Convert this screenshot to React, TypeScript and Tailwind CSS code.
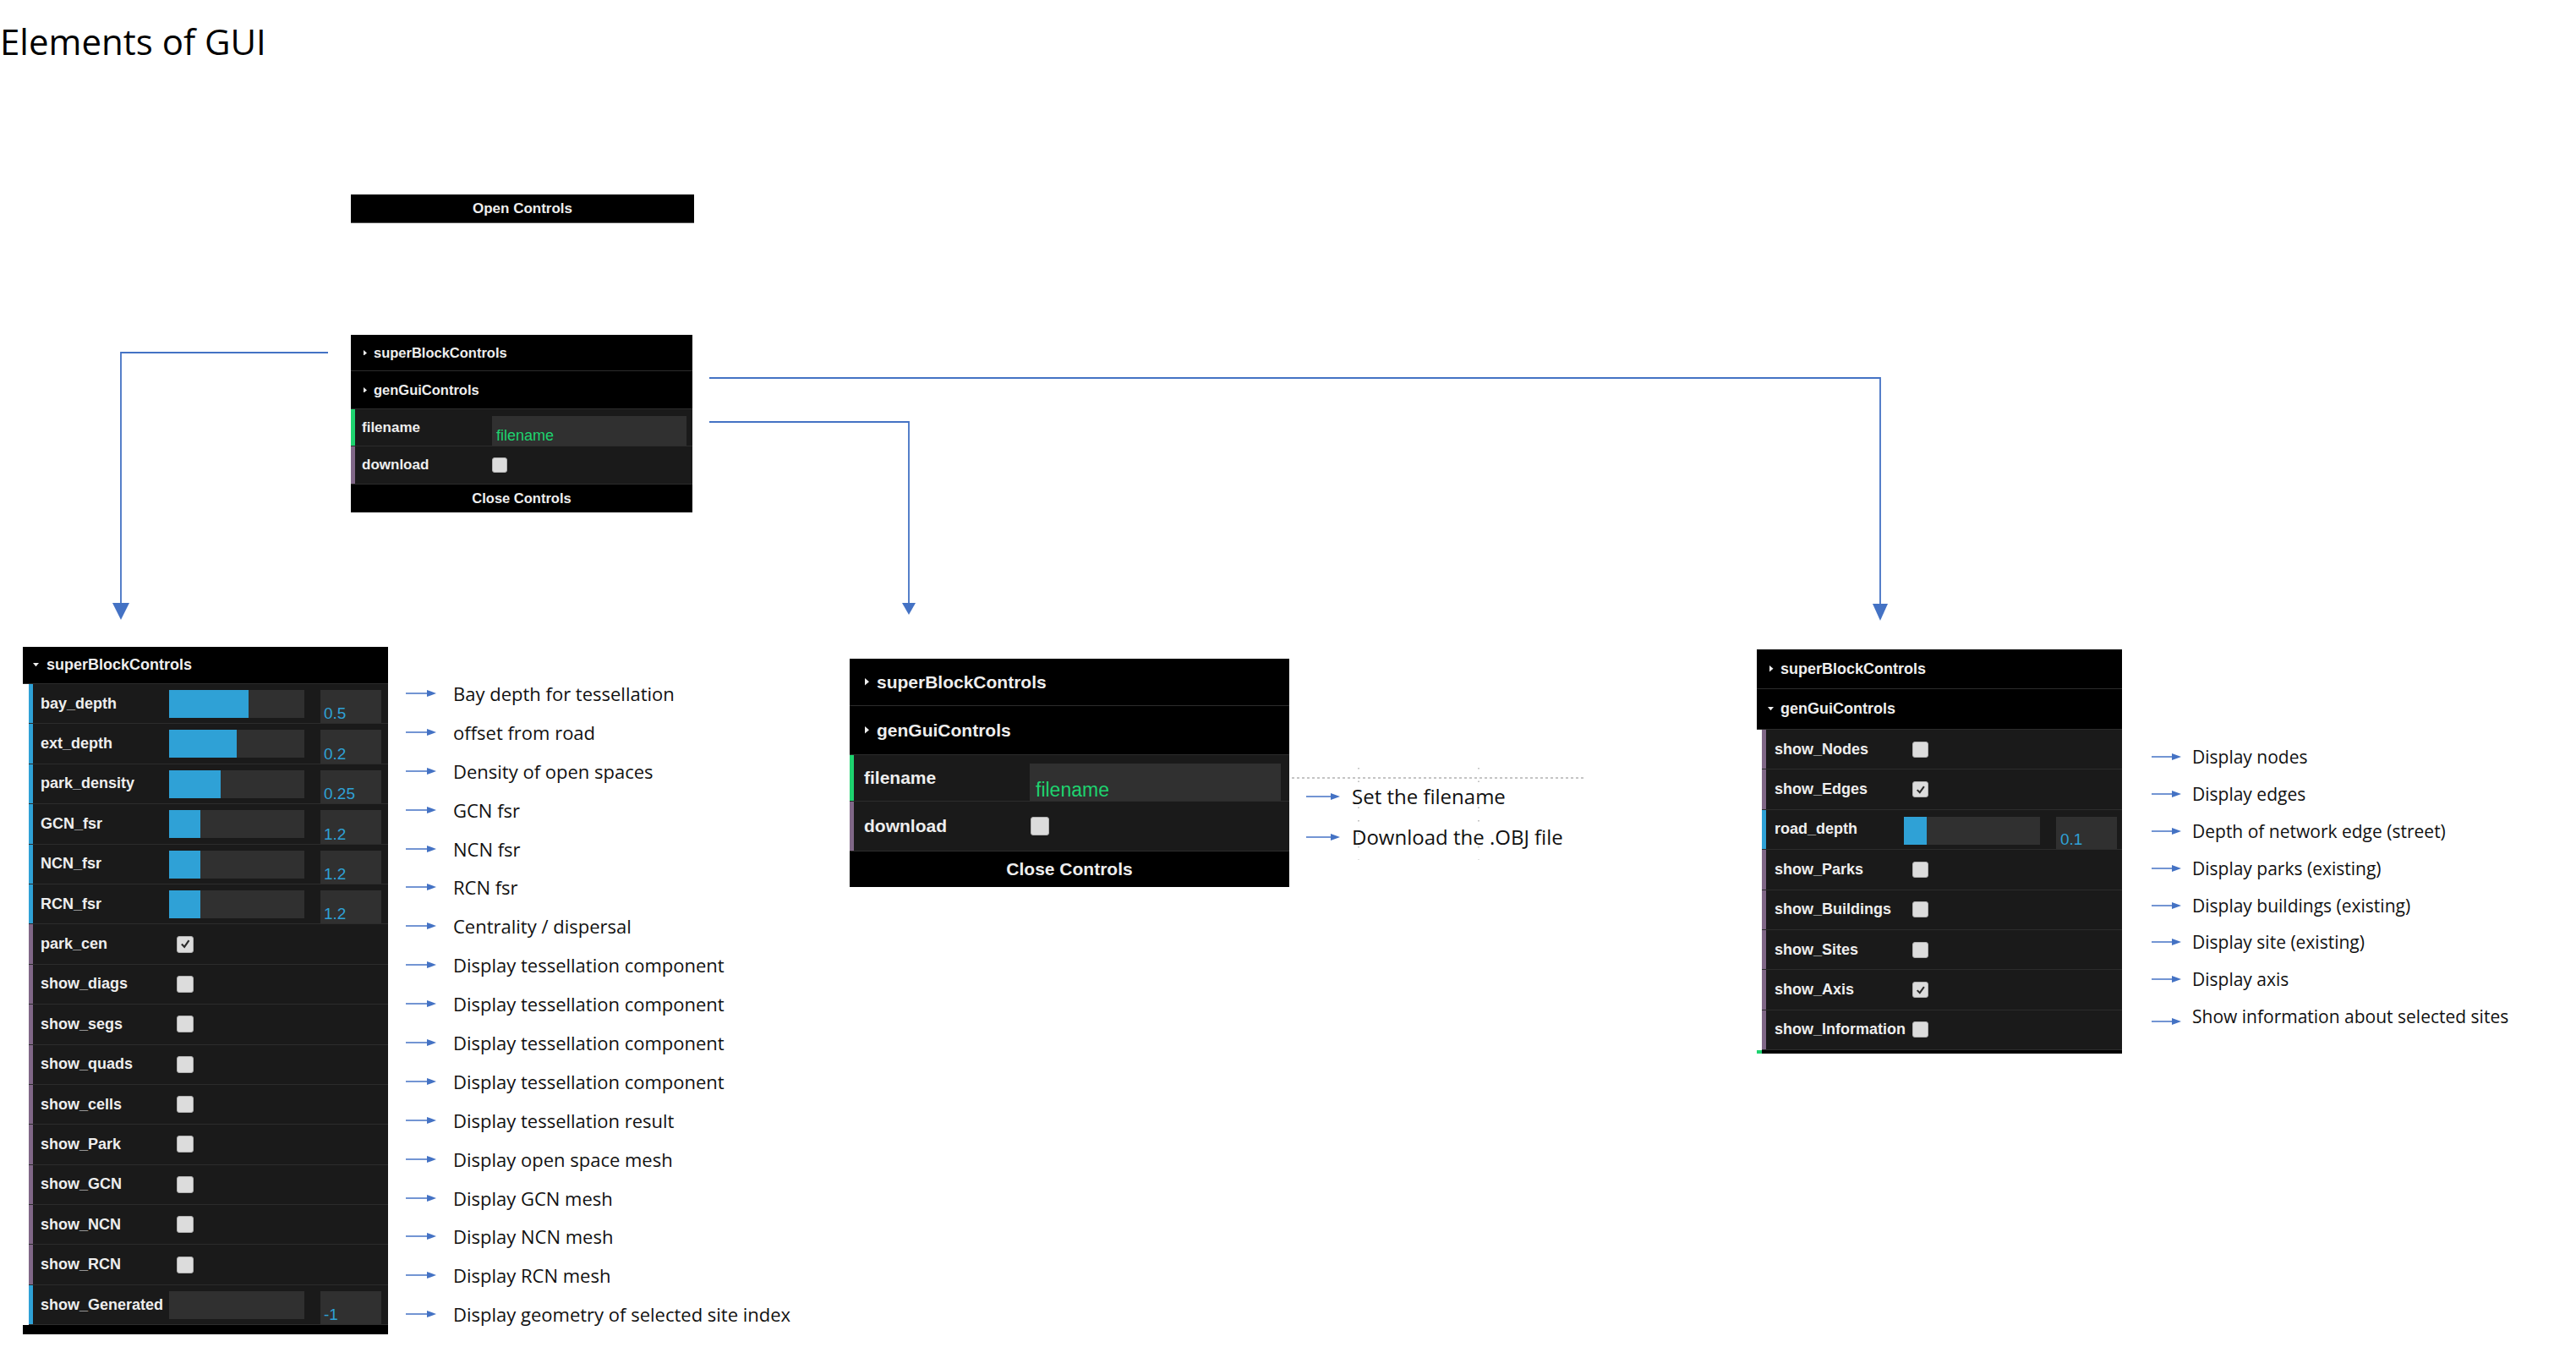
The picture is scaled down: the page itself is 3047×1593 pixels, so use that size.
import React from "react";

type Kind = "number" | "boolean" | "string";

type Ctrl = {
  label: string;
  kind: Kind;
  pct?: number;
  value?: string;
  on?: boolean;
};

const strip: Record<Kind, string> = {
  number: "bg-[#2fa1d6]",
  boolean: "bg-[#806787]",
  string: "bg-[#1ed36f]",
};

const GUI = "font-['Liberation_Sans',Arial,sans-serif]";
const NOTE = "font-['Open_Sans',sans-serif]";

const leftRows: Ctrl[] = [
  { label: "bay_depth", kind: "number", pct: 59, value: "0.5" },
  { label: "ext_depth", kind: "number", pct: 50, value: "0.2" },
  { label: "park_density", kind: "number", pct: 38, value: "0.25" },
  { label: "GCN_fsr", kind: "number", pct: 23, value: "1.2" },
  { label: "NCN_fsr", kind: "number", pct: 23, value: "1.2" },
  { label: "RCN_fsr", kind: "number", pct: 23, value: "1.2" },
  { label: "park_cen", kind: "boolean", on: true },
  { label: "show_diags", kind: "boolean" },
  { label: "show_segs", kind: "boolean" },
  { label: "show_quads", kind: "boolean" },
  { label: "show_cells", kind: "boolean" },
  { label: "show_Park", kind: "boolean" },
  { label: "show_GCN", kind: "boolean" },
  { label: "show_NCN", kind: "boolean" },
  { label: "show_RCN", kind: "boolean" },
  { label: "show_Generated", kind: "number", pct: 0, value: "-1" },
];

const rightRows: Ctrl[] = [
  { label: "show_Nodes", kind: "boolean" },
  { label: "show_Edges", kind: "boolean", on: true },
  { label: "road_depth", kind: "number", pct: 17, value: "0.1" },
  { label: "show_Parks", kind: "boolean" },
  { label: "show_Buildings", kind: "boolean" },
  { label: "show_Sites", kind: "boolean" },
  { label: "show_Axis", kind: "boolean", on: true },
  { label: "show_Information", kind: "boolean" },
];

const leftNotes = [
  "Bay depth for tessellation",
  "offset from road",
  "Density of open spaces",
  "GCN fsr",
  "NCN fsr",
  "RCN fsr",
  "Centrality / dispersal",
  "Display tessellation component",
  "Display tessellation component",
  "Display tessellation component",
  "Display tessellation component",
  "Display tessellation result",
  "Display open space mesh",
  "Display GCN mesh",
  "Display NCN mesh",
  "Display RCN mesh",
  "Display geometry of selected site index",
];

const rightNotes = [
  "Display nodes",
  "Display edges",
  "Depth of network edge (street)",
  "Display parks (existing)",
  "Display buildings (existing)",
  "Display site (existing)",
  "Display axis",
  "Show information about selected sites",
];

function Arrow({ len }: { len: number }) {
  return (
    <svg width={len} height={10} viewBox={`0 0 ${len} 10`} className="shrink-0">
      <line x1={0} y1={5} x2={len - 9} y2={5} stroke="#4472c4" strokeWidth={1.5} />
      <polygon points={`${len - 11},1 ${len},5 ${len - 11},9`} fill="#4472c4" />
    </svg>
  );
}

function Caret({ open, w }: { open?: boolean; w: number }) {
  if (open)
    return (
      <svg width={w} height={w * 0.6} viewBox="0 0 10 6" className="shrink-0">
        <polygon points="0,0 10,0 5,6" fill="#eeeeee" />
      </svg>
    );
  return (
    <svg width={w} height={w * 1.7} viewBox="0 0 6 10" className="shrink-0">
      <polygon points="0,0 6,5 0,10" fill="#eeeeee" />
    </svg>
  );
}

function Title({
  text,
  open,
  caret,
  className,
}: {
  text: string;
  open?: boolean;
  caret: number;
  className: string;
}) {
  return (
    <div
      className={`flex items-center bg-black border-b border-b-[#2c2c2c] font-bold text-[#eeeeee] whitespace-nowrap ${className}`}
    >
      <Caret open={open} w={caret} />
      <span>{text}</span>
    </div>
  );
}

function Row({
  kind,
  className,
  children,
}: {
  kind: Kind;
  className: string;
  children: React.ReactNode;
}) {
  return (
    <div className={`flex items-center bg-[#1a1a1a] border-b border-b-[#2c2c2c] ${className}`}>
      <div className={`w-[5px] self-stretch shrink-0 ${strip[kind]}`} />
      {children}
    </div>
  );
}

function Label({ className, children }: { className: string; children: React.ReactNode }) {
  return (
    <div className={`shrink-0 font-bold text-[#eeeeee] whitespace-nowrap ${className}`}>
      {children}
    </div>
  );
}

function Slider({ pct, className }: { pct: number; className: string }) {
  return (
    <div className={`shrink-0 bg-[#303030] ${className}`}>
      <div className="h-full bg-[#2fa1d6]" style={{ width: `${pct}%` }} />
    </div>
  );
}

function ValueBox({ className, children }: { className: string; children: React.ReactNode }) {
  return <div className={`shrink-0 flex items-end bg-[#303030] ${className}`}>{children}</div>;
}

function Check({ on, className }: { on?: boolean; className: string }) {
  return (
    <div
      className={`shrink-0 flex items-center justify-center rounded-[3px] bg-[#dcdcdc] border border-[#b0b0b0] ${className}`}
    >
      {on && (
        <svg viewBox="0 0 20 20" className="w-[80%] h-[80%]">
          <path d="M4 10.5 L8.5 15 L16 4.5" fill="none" stroke="#2a2a2a" strokeWidth={3} />
        </svg>
      )}
    </div>
  );
}

function TopPanel() {
  return (
    <div className={`w-[404px] ${GUI}`}>
      <Title text="superBlockControls" caret={4} className="h-[43px] pl-[15px] gap-[8px] text-[16.5px]" />
      <Title text="genGuiControls" caret={4} className="h-[45px] pl-[15px] gap-[8px] text-[16.5px]" />
      <Row kind="string" className="h-[44px]">
        <Label className="w-[162px] pl-[8px] text-[17px]">filename</Label>
        <ValueBox className="w-[230px] self-stretch mt-[8px] pl-[5px] pb-[2px] text-[18px] leading-[20px] text-[#1ed36f]">
          filename
        </ValueBox>
      </Row>
      <Row kind="boolean" className="h-[45px]">
        <Label className="w-[162px] pl-[8px] text-[17px]">download</Label>
        <Check className="w-[18px] h-[18px]" />
      </Row>
      <div className="h-[33px] flex items-center justify-center bg-black font-bold text-[16.5px] text-[#eeeeee]">
        Close Controls
      </div>
    </div>
  );
}

function LeftPanel() {
  return (
    <div className={`w-[432px] shrink-0 ${GUI}`}>
      <Title text="superBlockControls" open caret={7} className="h-[44px] pl-[12px] gap-[9px] text-[18px]" />
      <div className="ml-[7px]">
        {leftRows.map((r) => (
          <Row key={r.label} kind={r.kind} className="h-[47.4px]">
            <Label className="w-[161px] pl-[9px] text-[18px]">{r.label}</Label>
            {r.kind === "number" ? (
              <>
                <Slider pct={r.pct ?? 0} className="w-[160px] h-[33px] self-start mt-[7px]" />
                <ValueBox className="ml-[19px] w-[72px] self-stretch mt-[7px] pl-[4px] text-[19px] leading-[22px] text-[#2fa1d6]">
                  {r.value}
                </ValueBox>
              </>
            ) : (
              <Check on={r.on} className="ml-[9px] w-[20px] h-[20px]" />
            )}
          </Row>
        ))}
      </div>
      <div className="h-[11px] bg-black" />
    </div>
  );
}

function CenterPanel() {
  return (
    <div className={`w-[520px] shrink-0 mt-[14px] ${GUI}`}>
      <Title text="superBlockControls" caret={5} className="h-[56px] pl-[18px] gap-[9px] text-[21px]" />
      <Title text="genGuiControls" caret={5} className="h-[58px] pl-[18px] gap-[9px] text-[21px]" />
      <Row kind="string" className="h-[55px]">
        <Label className="w-[208px] pl-[12px] text-[21px]">filename</Label>
        <ValueBox className="w-[297px] self-stretch mt-[10px] pl-[7px] text-[23px] leading-[26px] text-[#1ed36f]">
          filename
        </ValueBox>
      </Row>
      <Row kind="boolean" className="h-[59px]">
        <Label className="w-[208px] pl-[12px] text-[21px]">download</Label>
        <Check className="ml-[1px] w-[22px] h-[22px]" />
      </Row>
      <div className="h-[42px] flex items-center justify-center bg-black font-bold text-[21px] text-[#eeeeee]">
        Close Controls
      </div>
    </div>
  );
}

function RightPanel() {
  return (
    <div className={`w-[432px] shrink-0 mt-[3px] ${GUI}`}>
      <Title text="superBlockControls" caret={4.5} className="h-[47px] pl-[15px] gap-[8.5px] text-[18px]" />
      <Title text="genGuiControls" open caret={7} className="h-[48px] pl-[13px] gap-[8px] text-[18px]" />
      <div className="ml-[6px]">
        {rightRows.map((r) => (
          <Row key={r.label} kind={r.kind} className="h-[47.4px]">
            <Label className="w-[163px] pl-[10px] text-[18px]">{r.label}</Label>
            {r.kind === "number" ? (
              <>
                <Slider pct={r.pct ?? 0} className="w-[161px] h-[33px] self-start mt-[8px]" />
                <ValueBox className="ml-[19px] w-[72px] self-stretch mt-[8px] pl-[5px] text-[19px] leading-[22px] text-[#2fa1d6]">
                  {r.value}
                </ValueBox>
              </>
            ) : (
              <Check on={r.on} className="ml-[10px] w-[19px] h-[19px]" />
            )}
          </Row>
        ))}
      </div>
      <div className="h-[4px] flex bg-black">
        <div className="w-[6px] bg-[#1ed36f]" />
      </div>
    </div>
  );
}

export default function App() {
  return (
    <div className="relative w-[3047px] h-[1593px] overflow-hidden bg-white">
      <h1 className={`pt-[23px] text-[42px] leading-[52px] font-normal text-black ${NOTE}`}>
        Elements of GUI
      </h1>

      <div
        className={`ml-[415px] mt-[155px] w-[406px] h-[34px] flex items-center justify-center bg-black border-b border-b-[#555] font-bold text-[17px] text-[#eeeeee] ${GUI}`}
      >
        Open Controls
      </div>

      <div className="ml-[415px] mt-[132px]">
        <TopPanel />
      </div>

      <div className="flex items-start mt-[159px]">
        <div className="ml-[27px]">
          <LeftPanel />
        </div>

        <div className={`ml-[21px] w-[525px] shrink-0 pt-[32px] flex flex-col text-[22px] text-[#111] ${NOTE}`}>
          {leftNotes.map((t, i) => (
            <div key={i} className="h-[45.9px] flex items-center gap-[20px] whitespace-nowrap">
              <Arrow len={36} />
              <span className="leading-[30px]">{t}</span>
            </div>
          ))}
        </div>

        <CenterPanel />

        <div className={`ml-[20px] w-[533px] shrink-0 pt-[153px] flex flex-col text-[24px] text-[#111] ${NOTE}`}>
          <div className="h-[48px] flex items-center gap-[14px]">
            <Arrow len={40} />
            <span className="leading-[30px]">Set the filename</span>
          </div>
          <div className="h-[48px] flex items-center gap-[14px]">
            <Arrow len={40} />
            <span className="leading-[30px]">Download the .OBJ file</span>
          </div>
        </div>

        <RightPanel />

        <div className={`ml-[35px] pt-[108px] flex flex-col text-[21px] text-[#111] ${NOTE}`}>
          {rightNotes.map((t, i) => (
            <div key={i} className="h-[43.9px] flex items-center gap-[13px] whitespace-nowrap">
              <span className={i === rightNotes.length - 1 ? "mt-[12px]" : ""}>
                <Arrow len={35} />
              </span>
              <span className="leading-[30px]">{t}</span>
            </div>
          ))}
        </div>
      </div>

      <svg className="absolute inset-0 pointer-events-none" width={3047} height={1593}>
        <g stroke="#4472c4" strokeWidth={1.8} fill="none">
          <path d="M388 417 H143 V714" />
          <path d="M839 499 H1075 V714" />
          <path d="M839 447 H2224 V716" />
        </g>
        <g fill="#4472c4">
          <polygon points="133,713 153,713 143,733" />
          <polygon points="1067,713 1083,713 1075,727" />
          <polygon points="2215,714 2233,714 2224,734" />
        </g>
        <g stroke="#8a8a8a" strokeWidth={1} fill="none">
          <path d="M1528 920 H1873" strokeDasharray="3 3" />
          <path d="M1607 908 V1017" strokeDasharray="1.5 14" />
          <path d="M1749 908 V1017" strokeDasharray="1.5 14" />
        </g>
      </svg>
    </div>
  );
}
